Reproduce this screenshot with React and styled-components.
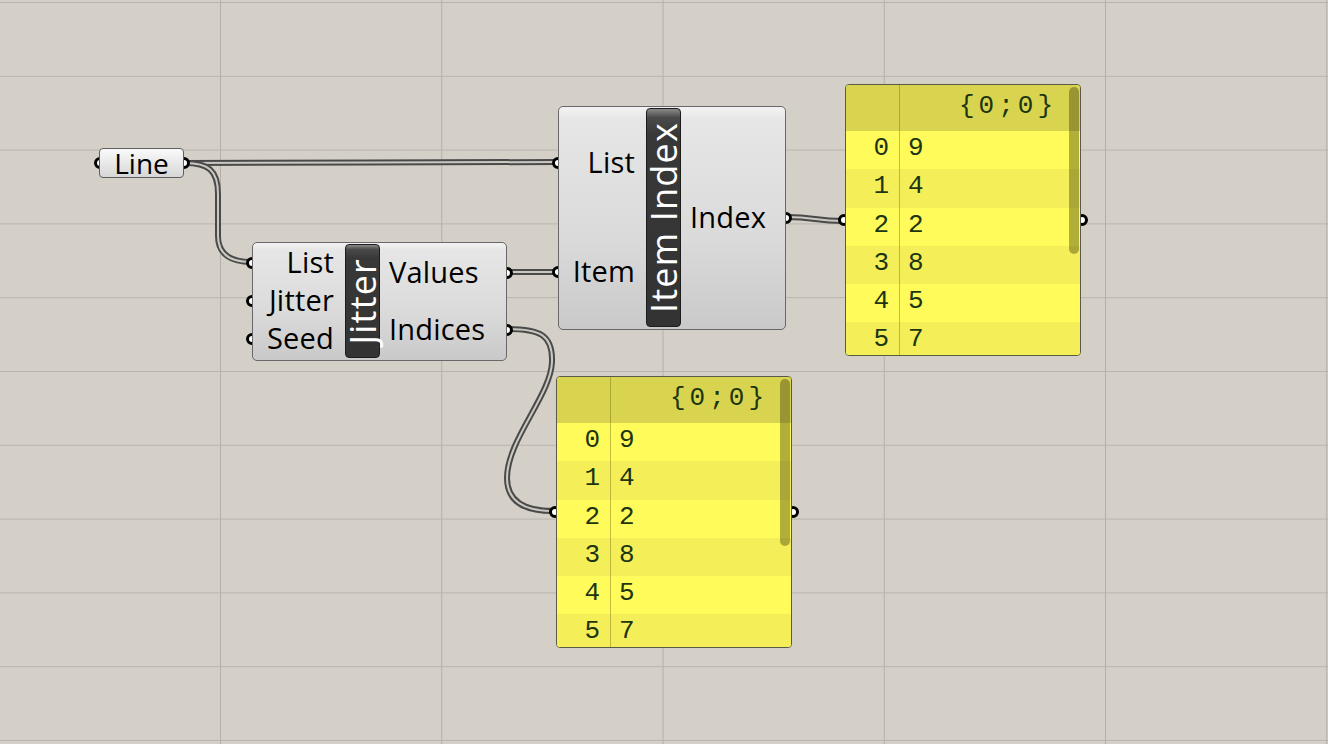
import styled, { createGlobalStyle } from "styled-components";

const GlobalStyle = createGlobalStyle`
  html, body {
    margin: 0;
    padding: 0;
    overflow: hidden;
    background: #d4d0c8;
  }
  body {
    font-family: "Open Sans", "Noto Sans", sans-serif;
  }
`;

const wires = [
  "M185,163 C370,163 370,162 556,162",
  "M185,163 C208,163 218,170 218,194 L218,236 C218,255 232,262 251,262",
  "M508,272 C530,272 534,272 556,272",
  "M508,329 C540,329 553,335 552,362 C551,395 507,440 507,478 C507,505 530,511 553,511",
  "M787,217 C815,217 815,221 843,221",
];

const panelValues = [9, 4, 2, 8, 5, 7];

function Wire({ d }) {
  return (
    <g fill="none" strokeLinecap="round">
      <path d={d} stroke="#4a4a4a" strokeWidth="6" />
      <path d={d} stroke="#cbc8c2" strokeWidth="2" />
    </g>
  );
}

function Component({ x, y, w, h, cols, name, inputs, outputs }) {
  return (
    <Body $x={x} $y={y} $w={w} $h={h} $cols={cols}>
      <PortColumn>
        {inputs.map((label) => (
          <Port key={label} $side="in">
            <Grip $side="left" />
            {label}
          </Port>
        ))}
      </PortColumn>
      <NameBar>
        <NameText>{name}</NameText>
      </NameBar>
      <PortColumn>
        {outputs.map((label) => (
          <Port key={label} $side="out">
            {label}
            <Grip $side="right" />
          </Port>
        ))}
      </PortColumn>
    </Body>
  );
}

function DataPanel({ x, y }) {
  return (
    <Panel $x={x} $y={y}>
      <PanelGrip $side="left" />
      <PanelGrip $side="right" />
      <PanelClip>
        <PanelHeader>
          <IndexCell />
          <PathLabel>{"{0;0}"}</PathLabel>
        </PanelHeader>
        {panelValues.map((v, i) => (
          <PanelRow key={i} $alt={i % 2 === 1}>
            <IndexCell>{i}</IndexCell>
            <ValueCell>{v}</ValueCell>
          </PanelRow>
        ))}
      </PanelClip>
      <ScrollThumb />
    </Panel>
  );
}

export default function App() {
  return (
    <>
      <GlobalStyle />
      <Canvas>
        <WireLayer width="1328" height="744">
          {wires.map((d) => (
            <Wire key={d} d={d} />
          ))}
        </WireLayer>

        <Param>
          <Grip $side="left" $edge={-6} />
          Line
          <Grip $side="right" $edge={-7} />
        </Param>

        <Component
          x={252}
          y={242}
          w={255}
          h={119}
          cols="90px 35px 1fr"
          name="Jitter"
          inputs={["List", "Jitter", "Seed"]}
          outputs={["Values", "Indices"]}
        />

        <Component
          x={558}
          y={106}
          w={228}
          h={224}
          cols="85px 35px 1fr"
          name="Item Index"
          inputs={["List", "Item"]}
          outputs={["Index"]}
        />

        <DataPanel x={845} y={84} />
        <DataPanel x={556} y={376} />
      </Canvas>
    </>
  );
}

const Canvas = styled.div`
  position: relative;
  z-index: 0;
  width: 1328px;
  height: 744px;
  overflow: hidden;
  background-color: #d4d0c8;
  background-image: linear-gradient(to right, #b4b0a9 1px, transparent 1px),
    linear-gradient(to bottom, #b9b5ae 1px, transparent 1px);
  background-size: 221.25px 100%, 100% 73.8px;
  background-position: 220px 0, 0 2px;
`;

const WireLayer = styled.svg`
  position: absolute;
  left: 0;
  top: 0;
  z-index: -2;
`;

const Grip = styled.span`
  position: absolute;
  z-index: -1;
  top: 50%;
  ${(p) => p.$side}: ${(p) => p.$edge ?? -9}px;
  width: 12px;
  height: 12px;
  margin-top: -6px;
  box-sizing: border-box;
  border: 3px solid #000;
  border-radius: 50%;
  background: #fff;
`;

const Param = styled.div`
  position: absolute;
  left: 99px;
  top: 148px;
  width: 85px;
  height: 30px;
  box-sizing: border-box;
  display: flex;
  align-items: center;
  justify-content: center;
  border: 1px solid #5e5e5e;
  border-radius: 4px;
  background: linear-gradient(to bottom, #fafafa 0, #ececec 40%, #d6d6d6 100%);
  font-size: 28px;
  line-height: 28px;
  color: #000;
`;

const Body = styled.div`
  position: absolute;
  left: ${(p) => p.$x}px;
  top: ${(p) => p.$y}px;
  width: ${(p) => p.$w}px;
  height: ${(p) => p.$h}px;
  box-sizing: border-box;
  display: grid;
  grid-template-columns: ${(p) => p.$cols};
  padding: 1px 2px 2px;
  border: 1px solid #686868;
  border-radius: 5px;
  background: linear-gradient(
    to bottom,
    #f3f3f3 0,
    #e6e6e6 6%,
    #dadada 60%,
    #c9c9c9 100%
  );
  color: #000;
`;

const PortColumn = styled.div`
  display: flex;
  flex-direction: column;
`;

const Port = styled.div`
  position: relative;
  flex: 1;
  display: flex;
  align-items: center;
  justify-content: ${(p) => (p.$side === "in" ? "flex-end" : "flex-start")};
  padding: ${(p) => (p.$side === "in" ? "0 11px 2px 0" : "0 0 2px 9px")};
  font-size: 29px;
  line-height: 30px;
  letter-spacing: 0.2px;
  white-space: nowrap;
`;

const NameBar = styled.div`
  display: flex;
  align-items: center;
  justify-content: center;
  border: 1px solid #1c1c1c;
  border-radius: 4px;
  background: linear-gradient(
    to bottom,
    #8a8a8a 0,
    #4a4a4a 4%,
    #383838 12%,
    #333 100%
  );
`;

const NameText = styled.span`
  writing-mode: vertical-rl;
  transform: rotate(180deg);
  color: #fff;
  font-size: 36px;
  line-height: 33px;
  letter-spacing: 1.2px;
  white-space: nowrap;
`;

const Panel = styled.div`
  position: absolute;
  left: ${(p) => p.$x}px;
  top: ${(p) => p.$y}px;
  width: 236px;
  height: 272px;
  box-sizing: border-box;
  border: 1px solid #5a5a48;
  border-radius: 4px;
  background: #fffb5b;
  font-family: "Liberation Mono", "DejaVu Sans Mono", monospace;
  color: #1c3510;
`;

const PanelClip = styled.div`
  height: 100%;
  overflow: hidden;
  border-radius: 3px;
`;

const PanelGrip = styled.span`
  position: absolute;
  z-index: -1;
  top: 129px;
  ${(p) => p.$side}: -8px;
  width: 12px;
  height: 12px;
  box-sizing: border-box;
  border: 3px solid #000;
  border-radius: 50%;
  background: #fff;
`;

const PanelHeader = styled.div`
  display: grid;
  grid-template-columns: 54px 1fr;
  height: 46px;
  background: #d8d44f;
`;

const PanelRow = styled.div`
  display: grid;
  grid-template-columns: 54px 1fr;
  height: 38.3px;
  background: ${(p) => (p.$alt ? "#f4ef58" : "#fffb5b")};
  font-size: 26px;
  line-height: 34px;
`;

const IndexCell = styled.div`
  box-sizing: border-box;
  padding-right: 10px;
  text-align: right;
  border-right: 1px solid rgba(120, 115, 20, 0.45);
`;

const ValueCell = styled.div`
  padding-left: 8px;
`;

const PathLabel = styled.div`
  padding-right: 23px;
  text-align: right;
  font-size: 26px;
  line-height: 42px;
  letter-spacing: 4px;
`;

const ScrollThumb = styled.div`
  position: absolute;
  top: 2px;
  right: 1px;
  width: 10px;
  height: 167px;
  border-radius: 5px;
  background: rgba(40, 40, 0, 0.36);
`;
